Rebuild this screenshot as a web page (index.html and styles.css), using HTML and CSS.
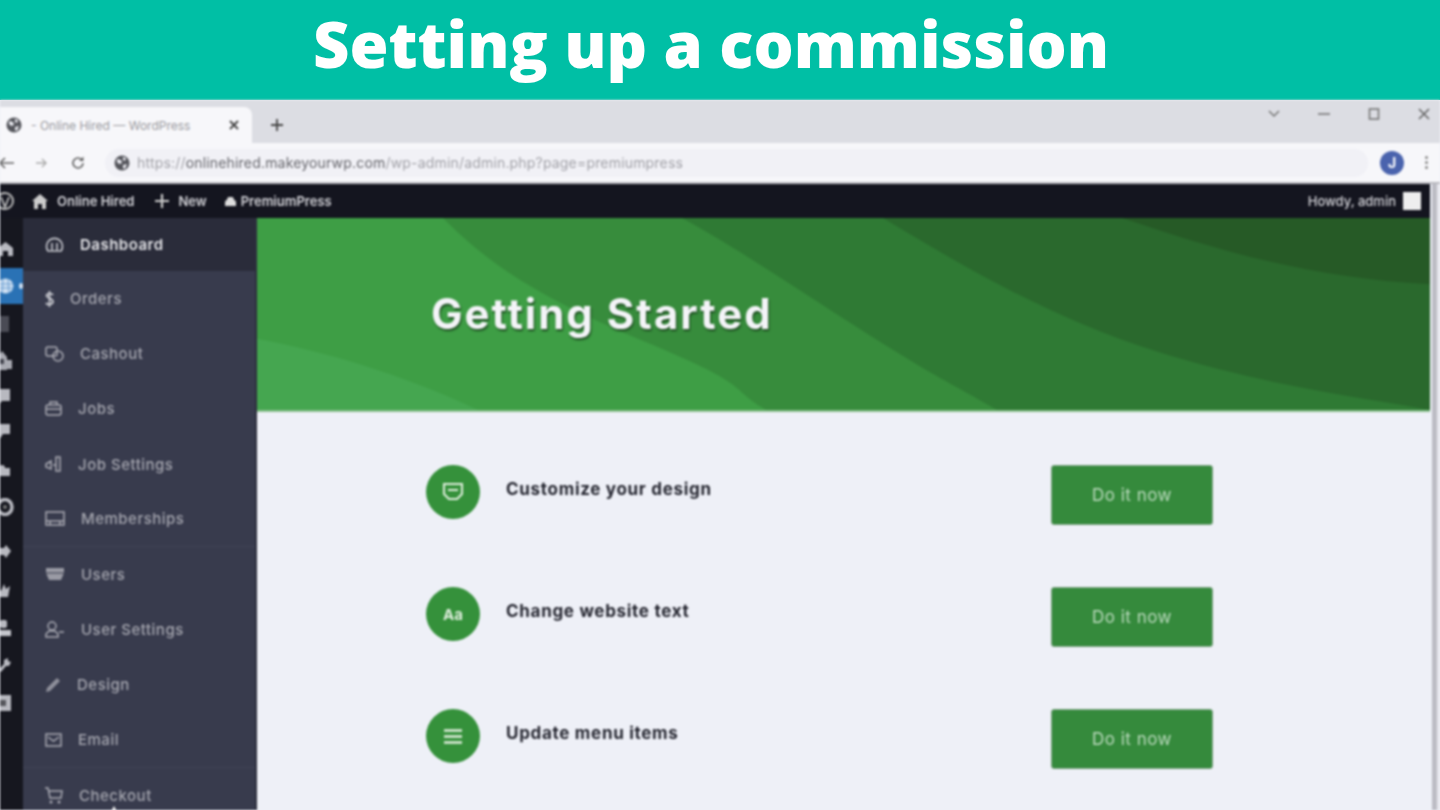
FILE: index.html
```html
<!doctype html>
<html>
<head>
<title>Setting up a commission</title>
<meta name="viewport" content="width=device-width">
<link rel="stylesheet" href="styles.css">
</head>
<body>
<header class="banner"><h1>Setting up a commission</h1></header>

<div class="shot">
  <div class="tabstrip">
    <div class="tab">
      <svg class="tabicon" width="16" height="16" viewBox="0 0 16 16"><circle cx="8" cy="8" r="7.5" fill="#55565c"/><path d="M3 4l4 1 1 3-3 1-2-2zM9 2l3 1-1 3-2-1zM9 10l4-1-2 5-2-1z" fill="#e8e8ee"/></svg>
      <span class="tabtitle">- Online Hired — WordPress</span>
      <svg class="tabclose" width="10" height="10" viewBox="0 0 10 10"><path d="M1 1l8 8M9 1l-8 8" stroke="#444" stroke-width="1.8"/></svg>
    </div>
    <svg class="newtab" width="14" height="14" viewBox="0 0 14 14"><path d="M7 1v12M1 7h12" stroke="#444" stroke-width="1.8"/></svg>
    <div class="winctl">
      <svg width="12" height="8" viewBox="0 0 12 8"><path d="M1 1l5 5 5-5" fill="none" stroke="#777" stroke-width="1.5"/></svg>
      <svg width="12" height="8" viewBox="0 0 12 8"><path d="M0 4h12" stroke="#777" stroke-width="1.6"/></svg>
      <svg width="12" height="12" viewBox="0 0 12 12"><rect x="1.5" y="1" width="9" height="10" fill="none" stroke="#777" stroke-width="1.6"/></svg>
      <svg width="12" height="12" viewBox="0 0 12 12"><path d="M1 1l10 10M11 1l-10 10" stroke="#666" stroke-width="1.6"/></svg>
    </div>
  </div>

  <div class="toolbar">
    <svg class="navicon back" width="16" height="12" viewBox="0 0 16 12"><path d="M16 6H2M7 1L2 6l5 5" fill="none" stroke="#666" stroke-width="1.6"/></svg>
    <svg class="navicon fwd" width="12" height="10" viewBox="0 0 12 10"><path d="M0 5h10M6 1l4 4-4 4" fill="none" stroke="#aaa" stroke-width="1.4"/></svg>
    <svg class="navicon reload" width="14" height="14" viewBox="0 0 14 14"><path d="M12 7a5 5 0 1 1-1.5-3.6" fill="none" stroke="#666" stroke-width="1.6"/><path d="M12.5 0.5v4.5h-4.5z" fill="#666"/></svg>
    <div class="omnibox">
      <svg width="16" height="16" viewBox="0 0 16 16"><circle cx="8" cy="8" r="7.5" fill="#55565c"/><path d="M3 4l4 1 1 3-3 1-2-2zM9 2l3 1-1 3-2-1zM9 10l4-1-2 5-2-1z" fill="#e8e8ee"/></svg>
      <span class="url">https://<b>onlinehired.makeyourwp.com</b>/wp-admin/admin.php?page=premiumpress</span>
    </div>
    <div class="avatar">J</div>
    <div class="dots"><i></i><i></i><i></i></div>
  </div>

  <div class="wp">
    <div class="wpmain">
      <div class="adminbar">
        <svg class="wplogo" width="20" height="20" viewBox="0 0 20 20"><circle cx="10" cy="10" r="8" fill="none" stroke="#bbb" stroke-width="2"/><path d="M6 6l4 10 4-10" fill="none" stroke="#bbb" stroke-width="1.8"/></svg>
        <svg class="baricon" width="16" height="15" viewBox="0 0 16 15"><path d="M8 0l8 7h-2v8h-4v-5H6v5H2V7H0z" fill="#ccc"/></svg>
        <span class="barlink">Online Hired</span>
        <svg class="barplus" width="14" height="14" viewBox="0 0 14 14"><path d="M7 0v14M0 7h14" stroke="#ccc" stroke-width="2.2"/></svg>
        <span class="barlink">New</span>
        <svg class="barcloud" width="11" height="9" viewBox="0 0 11 9"><path d="M2 3a3.5 3.5 0 0 1 7 0c1.5 0 2 1 2 3v3H0V6c0-2 .7-3 2-3z" fill="#ddd"/></svg>
        <span class="barlink">PremiumPress</span>
        <span class="howdy">Howdy, admin</span>
        <div class="baravatar"></div>
      </div>

      <div class="columns">
        <div class="rail">
          <svg class="ri r-home" width="15" height="14" viewBox="0 0 15 14"><path d="M7.5 0l7.5 6v8H10V9H5v5H0V6z" fill="#b8b9c0"/></svg>
          <div class="railactive">
            <svg width="17" height="16" viewBox="0 0 17 16"><ellipse cx="8.5" cy="8" rx="8" ry="7.5" fill="#cfe0f2"/><path d="M1 6h15M1 10h15M6 1l-1 14M11 1l1 14" stroke="#6b9fd2"/></svg>
            <i class="railarrow"></i>
          </div>
          <svg class="ri r-dim" width="11" height="16" viewBox="0 0 11 16"><rect width="11" height="16" fill="#4a4b55"/></svg>
          <svg class="ri r-house" width="14" height="20" viewBox="0 0 14 20"><path d="M0 7l4-6 5 6v13H0zM9 10h5v9H9z" fill="#a9aab2"/><rect x="2" y="9" width="4" height="5" fill="#44454f"/></svg>
          <svg class="ri r-bubble" width="12" height="18" viewBox="0 0 12 18"><path d="M0 1h12v12H4l-4 5z" fill="#b8b9c0"/></svg>
          <svg class="ri r-comment" width="12" height="18" viewBox="0 0 12 18"><path d="M0 1h12v10H5l-4 6z" fill="#b8b9c0"/></svg>
          <svg class="ri r-cloud" width="12" height="12" viewBox="0 0 12 12"><path d="M0 6c0-3 2-5 4-5s3 1 3 3h5v8H0z" fill="#b8b9c0"/></svg>
          <svg class="ri r-circle" width="16" height="18" viewBox="0 0 16 18"><ellipse cx="7" cy="9" rx="7" ry="7.5" fill="none" stroke="#b8b9c0" stroke-width="3.5"/><circle cx="7" cy="9" r="2" fill="#777"/></svg>
          <svg class="ri r-arrow" width="13" height="13" viewBox="0 0 13 13"><path d="M0 3h6l2-3 5 6-5 7-2-3H0z" fill="#b8b9c0"/></svg>
          <svg class="ri r-crown" width="13" height="14" viewBox="0 0 13 14"><path d="M0 5l3 3 3-7 2 5 4-3-2 11H2z" fill="#b8b9c0"/></svg>
          <svg class="ri r-person" width="13" height="16" viewBox="0 0 13 16"><rect x="2" width="7" height="8" rx="2" fill="#b8b9c0"/><rect y="10" width="13" height="6" fill="#c5c6cc"/></svg>
          <svg class="ri r-wrench" width="13" height="14" viewBox="0 0 13 14"><path d="M0 12l6-6 0-4 4-2 0 3 3 1-2 4H8l-5 6z" fill="#b8b9c0"/></svg>
          <svg class="ri r-box" width="13" height="16" viewBox="0 0 13 16"><rect width="13" height="16" fill="#b8b9c0"/><rect x="2" y="5" width="6" height="6" fill="#55565c"/></svg>
        </div>

        <nav class="side">
          <a class="item current">
            <svg width="19" height="17" viewBox="0 0 19 17"><path d="M3 15a8 8 0 1 1 13 0zM7 14V7M12 14V7" fill="none" stroke="#c9cad0" stroke-width="1.6"/></svg>
            Dashboard
          </a>
          <a class="item">
            <svg width="9" height="16" viewBox="0 0 9 16"><path d="M8 4c-1-2-6-2-6.5 .5S8 7 8 10.5 2 14 1 12M4.5 0v16" fill="none" stroke="#c9cad0" stroke-width="1.8"/></svg>
            Orders
          </a>
          <a class="item">
            <svg width="19" height="16" viewBox="0 0 19 16"><rect x="1" y="1" width="11" height="9" rx="2" fill="none" stroke="#a9aab3" stroke-width="1.5"/><circle cx="13" cy="10" r="5" fill="none" stroke="#a9aab3" stroke-width="1.5"/></svg>
            Cashout
          </a>
          <a class="item">
            <svg width="17" height="15" viewBox="0 0 17 15"><rect x="1" y="4" width="15" height="10" rx="2" fill="none" stroke="#a9aab3" stroke-width="1.5"/><path d="M5 4V1h7v3M1 8h15" fill="none" stroke="#a9aab3" stroke-width="1.5"/></svg>
            Jobs
          </a>
          <a class="item">
            <svg width="17" height="16" viewBox="0 0 17 16"><path d="M1 8l5-3v8l-5-2zM11 1h4v14h-4zM8 9h3" fill="none" stroke="#a9aab3" stroke-width="1.5"/></svg>
            Job Settings
          </a>
          <a class="item sep">
            <svg width="20" height="15" viewBox="0 0 20 15"><rect x="1" y="1" width="18" height="13" fill="none" stroke="#a9aab3" stroke-width="1.5"/><path d="M1 10h18M5 10v4M15 10v4" stroke="#a9aab3" stroke-width="1.5"/></svg>
            Memberships
          </a>
          <a class="item">
            <svg width="20" height="15" viewBox="0 0 20 15"><path d="M1 1h18v5l-3 7H4L1 6z" fill="#9a9ba5"/><path d="M1 6h18" stroke="#383b4d"/></svg>
            Users
          </a>
          <a class="item">
            <svg width="20" height="17" viewBox="0 0 20 17"><circle cx="7" cy="5" r="4" fill="none" stroke="#a9aab3" stroke-width="1.5"/><path d="M1 16v-3l3-3h6l3 3v3zM14 11h5" fill="none" stroke="#a9aab3" stroke-width="1.5"/></svg>
            User Settings
          </a>
          <a class="item">
            <svg width="16" height="16" viewBox="0 0 16 16"><path d="M1 15l1-4L12 1l3 3L5 14z" fill="#8f909b"/></svg>
            Design
          </a>
          <a class="item sep">
            <svg width="17" height="14" viewBox="0 0 17 14"><rect x="1" y="1" width="15" height="12" fill="none" stroke="#a9aab3" stroke-width="1.5"/><path d="M3 4l5.5 4L14 4" fill="none" stroke="#a9aab3" stroke-width="1.5"/></svg>
            Email
          </a>
          <a class="item">
            <svg width="18" height="17" viewBox="0 0 18 17"><path d="M0 1h3l2 10h11l1-7H4" fill="none" stroke="#a9aab3" stroke-width="1.5"/><circle cx="6" cy="15" r="1.5" fill="#a9aab3"/><circle cx="14" cy="15" r="1.5" fill="#a9aab3"/></svg>
            Checkout
          </a>
          <svg class="cursor" width="8" height="10" viewBox="0 0 8 10"><path d="M4 0l4 7H5v3H3V7H0z" fill="#eee"/></svg>
        </nav>

        <main class="content">
          <section class="hero">
            <svg class="waves" viewBox="0 0 1173 194" preserveAspectRatio="none">
              <rect width="1173" height="194" fill="#3e9e45"/>
              <path d="M0 122C70 135 150 160 221 194H0z" fill="#45a650"/>
              <path d="M186 0C230 45 280 80 388 125S470 170 509 194H1173V0z" fill="#378c3c"/>
              <path d="M425 0C480 30 560 85 623 125S700 170 740 194H1173V0z" fill="#2f7a34"/>
              <path d="M626 0C700 45 790 100 900 135S1100 180 1173 194V0z" fill="#2a692d"/>
              <path d="M865 0C940 25 1040 60 1173 67V0z" fill="#265a26"/>
            </svg>
            <h2>Getting Started</h2>
          </section>

          <div class="steps">
            <div class="step">
              <div class="circle">
                <svg width="20" height="18" viewBox="0 0 20 18"><path d="M1 1h18v10l-5 5H6l-5-5z" fill="none" stroke="#dfeedd" stroke-width="2"/><path d="M5 7h10" stroke="#dfeedd" stroke-width="2"/></svg>
              </div>
              <div class="label">Customize your design</div>
              <a class="btn">Do it now</a>
            </div>
            <div class="step">
              <div class="circle"><span class="aa">Aa</span></div>
              <div class="label">Change website text</div>
              <a class="btn">Do it now</a>
            </div>
            <div class="step">
              <div class="circle">
                <svg width="18" height="15" viewBox="0 0 18 15"><path d="M0 1.5h18M0 7.5h18M0 13.5h18" stroke="#dfeedd" stroke-width="2.4"/></svg>
              </div>
              <div class="label">Update menu items</div>
              <a class="btn">Do it now</a>
            </div>
          </div>
        </main>
      </div>
    </div>
    <div class="scrollstrip"></div>
  </div>
</div>
</body>
</html>
```

FILE: styles.css
```css
html, body, h1, h2 {margin:0; padding:0}
html, body {width:1440px; height:810px; overflow:hidden; background:#eef0f7}

.banner {height:100px; background:#00bfa5; display:flex; justify-content:center; padding-right:18px; box-sizing:border-box}
.banner h1 {font:800 63.2px/88px "Open Sans",sans-serif; color:#fff}

.shot {height:710px; overflow:hidden; font-family:Inter,sans-serif; filter:blur(.8px); display:flex; flex-direction:column}

.tabstrip {height:43px; flex:none; background:#dcdde3; display:flex; align-items:flex-end}
.tab {width:252px; height:36px; box-sizing:border-box; background:#f7f7fa; border-radius:0 8px 0 0; display:flex; align-items:center; padding:0 0 0 6px}
.tabicon {flex:none}
.tabtitle {font-size:12px; color:#9a9aa0; margin-left:9px; width:198px; white-space:nowrap}
.tabclose {flex:none}
.newtab {margin:0 0 11px 18px}
.winctl {display:flex; margin-left:auto; gap:38px; align-items:center; height:28px; padding-right:10px; align-self:flex-start}

.toolbar {height:41px; flex:none; background:#f7f7fa; display:flex; align-items:center; box-sizing:border-box; border-bottom:2px solid #b9b9bf}
.navicon {flex:none}
.back {margin-left:-2px}
.fwd {margin-left:22px}
.reload {margin-left:23px}
.omnibox {width:1263px; height:28px; box-sizing:border-box; margin-left:20px; padding-left:9px; background:#f1f1f6; border-radius:14px; display:flex; align-items:center; gap:7px}
.url {font-size:14px; letter-spacing:.18px; color:#a2a2a8; white-space:nowrap}
.url b {font-weight:400; color:#66666c}
.avatar {width:24px; height:24px; margin-left:12px; border-radius:50%; background:#4a63ad; color:#fff; font:700 14px/24px Inter,sans-serif; text-align:center}
.dots {display:flex; flex-direction:column; gap:2px; margin-left:21px}
.dots i {width:3px; height:3px; border-radius:50%; background:#888}

.wp {flex:1; display:flex; min-height:0}
.wpmain {width:1430px; flex:none; display:flex; flex-direction:column; min-height:0}
.adminbar {height:34px; flex:none; background:#14151f; display:flex; align-items:center; color:#d4d4d9; font-size:13px; font-weight:600}
.wplogo {margin-left:-5px}
.baricon {margin-left:17px}
.barlink {margin-left:9px; white-space:nowrap}
.barplus {margin-left:21px}
.barcloud {margin-left:18px; margin-right:-4px}
.howdy {margin-left:auto; font-weight:500}
.baravatar {width:18px; height:18px; background:#eee; margin:0 9px 0 7px}

.columns {flex:1; display:flex; min-height:0}
.rail {width:23px; flex:none; background:#16171f; display:flex; flex-direction:column; overflow:hidden}
.ri {flex:none; display:block; margin-left:-2px}
.r-home {margin-top:24px}
.railactive {height:36px; margin-top:12px; flex:none; background:#2a72b5; display:flex; align-items:center; position:relative}
.railactive svg {margin-left:-3px}
.railarrow {position:absolute; right:0; top:15px; width:4px; height:6px; background:#cfe0f2; border-radius:50%}
.r-dim {margin-top:12px}
.r-house {margin-top:18px}
.r-bubble {margin-top:18px}
.r-comment {margin-top:17px}
.r-cloud {margin-top:23px}
.r-circle {margin-top:22px}
.r-arrow {margin-top:29px}
.r-crown {margin-top:25px}
.r-person {margin-top:23px}
.r-wrench {margin-top:22px}
.r-box {margin-top:23px}

.side {width:234px; flex:none; background:#383b4d; display:flex; flex-direction:column; border-right:2px solid #2d2f3d; box-sizing:border-box; position:relative}
.item {height:55.2px; flex:none; box-sizing:border-box; display:flex; align-items:center; gap:16px; padding-left:22px; color:#a5a6af; font-size:15px; letter-spacing:.5px; font-weight:500; white-space:nowrap}
.item.current {height:53px; background:#2a2c3a; color:#e4e4e8; font-weight:600}
.item.sep {border-bottom:1px solid #414457}
.cursor {position:absolute; left:87px; bottom:-6px}

.content {flex:1; min-width:0; background:#eef0f7}
.hero {height:194px; box-sizing:border-box; position:relative; display:flex; align-items:center; padding-left:174px; border-bottom:2px solid #8bbf8e}
.waves {position:absolute; left:0; top:0; width:100%; height:100%}
.hero h2 {position:relative; font:700 42px Inter,sans-serif; letter-spacing:2px; color:#f4f4f8; text-shadow:1px 2px 2px #1f4d22; margin-top:-2px}

.steps {padding:53px 0 0 169px; display:flex; flex-direction:column; gap:62px}
.step {display:flex; align-items:flex-start}
.circle {width:54px; height:54px; flex:none; border-radius:50%; background:#35913b; display:flex; align-items:center; justify-content:center}
.aa {font:700 15px Inter,sans-serif; color:#dfeedd}
.label {width:545px; margin-left:26px; padding-top:13px; font-size:17px; letter-spacing:.7px; font-weight:700; line-height:22px; color:#24252f; white-space:nowrap}
.btn {width:162px; height:60px; flex:none; box-sizing:border-box; background:#358a3c; border-radius:3px; border:1px solid #7fa384; color:#bcdabe; font-size:17px; letter-spacing:.5px; line-height:58px; text-align:center}

.scrollstrip {width:10px; flex:none; background:linear-gradient(90deg,#eef0f7 2px,#bcbcc4 2px,#bcbcc4 7px,#e8e8ee 7px)}
```
